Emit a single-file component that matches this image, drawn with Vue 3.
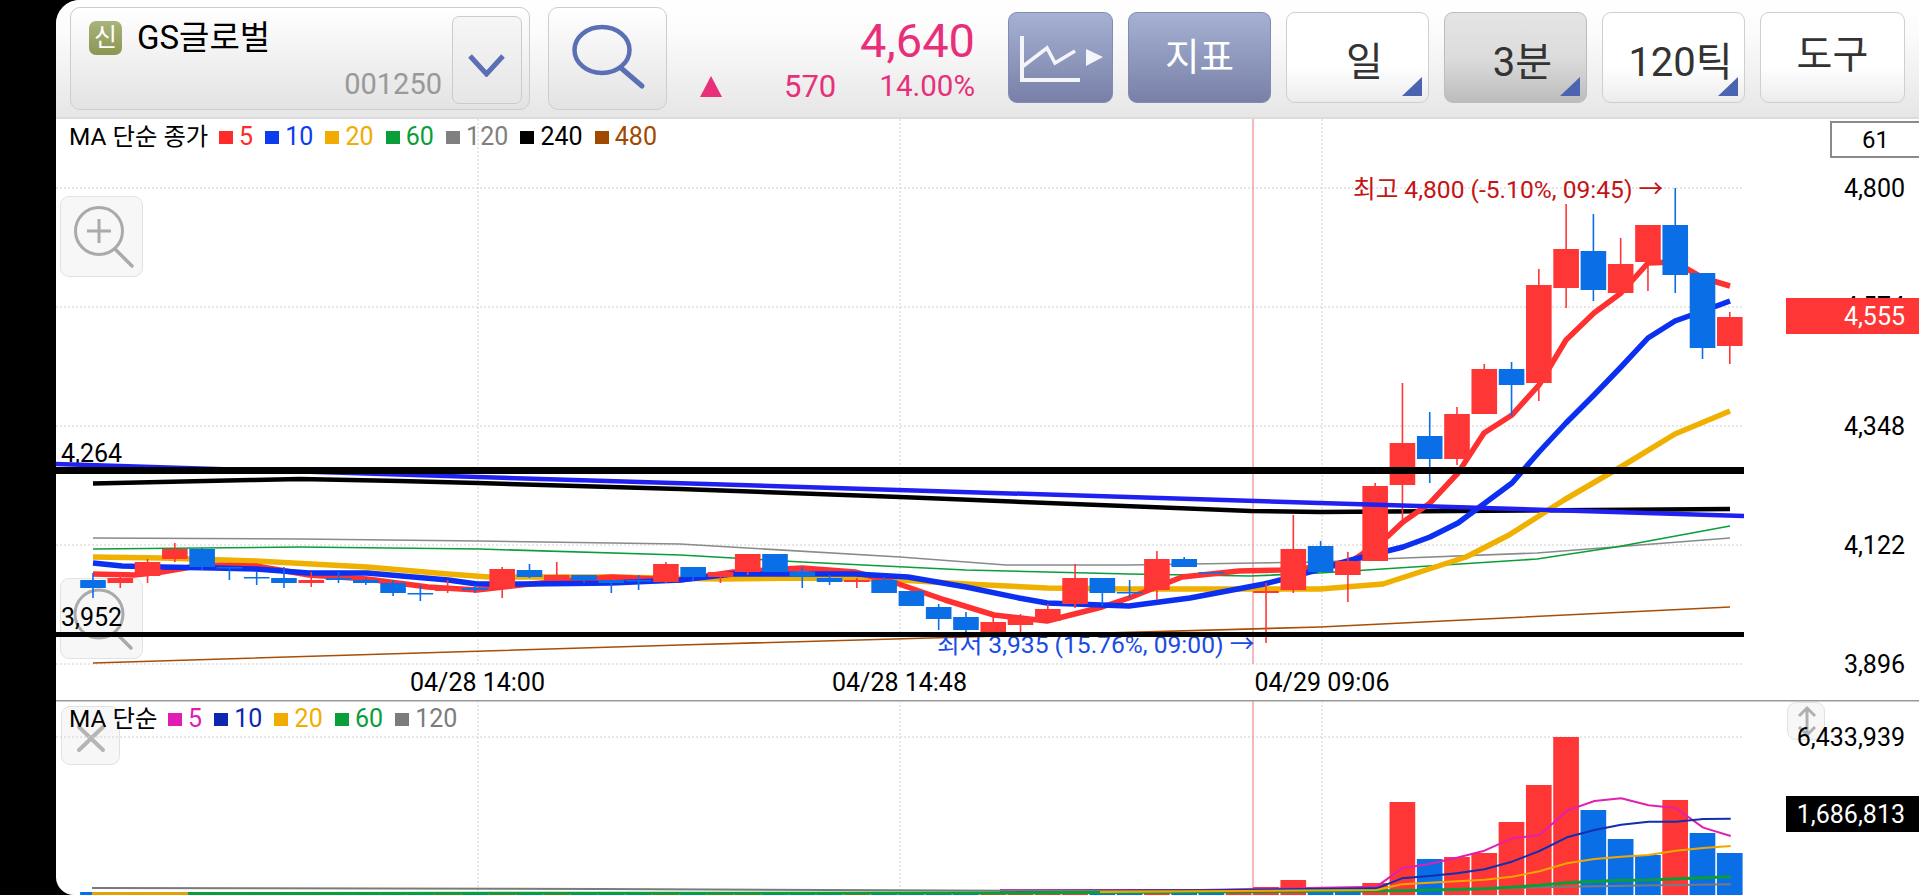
<script setup>
const X0 = 93
const STEP = 27.28
const cx = (i) => X0 + STEP * i

// dir, body top, body bottom, wick top, wick bottom (page pixels)
const raw = [
  ['b',580,588,573,598],['r',578,583,573,588],['r',562,576,559,583],['r',549,559,543,562],
  ['b',549,567,548,570],['b',567,568,567,580],['b',577,578,572,585],['b',578,583,567,588],
  ['r',580,583,572,587],['b',578,580,572,583],['b',580,583,578,585],['b',583,593,580,596],
  ['b',593,594,585,601],['r',588,591,580,593],['b',588,590,585,593],['r',569,588,567,598],
  ['b',570,577,564,578],['r',575,580,562,581],['b',575,580,575,583],['b',580,583,580,593],
  ['b',580,581,575,590],['r',564,582,562,583],['b',567,577,567,581],['r',572,577,572,583],
  ['r',554,572,554,575],['b',554,572,554,572],['b',572,577,567,588],['b',578,582,575,585],
  ['r',580,582,578,588],['b',580,593,577,593],['b',591,606,591,606],['b',607,619,604,630],
  ['b',617,630,612,632],['r',622,633,617,637],['r',617,625,614,633],['r',609,621,604,622],
  ['r',578,604,564,608],['b',578,593,578,606],['b',592,593,580,598],['r',559,590,551,600],
  ['b',559,567,557,567],['b',572,573,572,573],['r',571,573,571,573],['r',591,593,583,643],
  ['r',549,590,515,593],['b',546,572,541,572],['r',561,575,552,602],['r',486,561,483,561],
  ['r',443,485,383,520],['b',436,459,412,483],['r',414,459,407,465],['r',369,414,364,414],
  ['b',369,385,362,416],['r',285,383,269,401],['r',249,288,204,308],['b',251,290,214,301],
  ['r',264,293,238,293],['r',225,262,225,291],['b',225,275,188,293],['b',273,348,273,359],
  ['r',317,346,312,364]
]
const COLORS = { r: '#ff3636', b: '#0a6fe6' }
const candles = raw.map((c, i) => ({
  x: cx(i),
  color: COLORS[c[0]],
  top: c[1],
  h: Math.max(c[2] - c[1], 1.5),
  wt: c[3],
  wb: c[4]
}))

const toStr = (p) => p.map((q) => q.join(',')).join(' ')

const ma = [
  { c: '#8a8a8a', w: 1.6, p: [[93,538],[300,539],[478,541],[680,544],[900,557],[1006,565],[1129,565],[1320,562],[1379,559],[1537,553],[1730,538]] },
  { c: '#0a9e38', w: 1.6, p: [[93,549],[300,547],[479,549],[680,555],[802,562],[966,570],[1129,574],[1251,576],[1320,573],[1537,559],[1616,547],[1730,526]] },
  { c: '#a84e06', w: 1.6, p: [[93,663],[680,645],[1320,627],[1730,607]] },
  { c: '#000', w: 4.5, p: [[93,483.5],[250,480],[300,479],[400,481],[478,483],[680,489],[900,497],[1251,511],[1320,512],[1730,509]] },
  { c: '#f0b000', w: 5.5, p: [[93,557],[162,558],[256,561],[367,567],[448,574],[489,577],[611,577],[721,579],[802,578],[884,579],[966,584],[1047,588],[1129,589],[1320,589],[1383,584],[1466,557],[1509,535],[1564,500],[1624,465],[1675,434],[1730,411]] },
  { c: '#ff3030', w: 5.5, p: [[93,574],[134,575],[162,572],[203,565],[256,566],[309,575],[367,579],[428,587],[477,590],[530,584],[611,577],[680,580],[733,572],[802,568],[855,572],[896,583],[945,600],[994,615],[1047,621],[1102,607],[1129,598],[1182,577],[1239,571],[1280,570],[1346,565],[1387,537],[1403,522],[1430,503],[1458,473],[1484,433],[1512,415],[1539,385],[1566,340],[1594,313],[1621,293],[1648,263],[1675,262],[1703,278],[1730,286]] },
  { c: '#0c30f0', w: 5.5, p: [[93,563],[122,566],[162,567],[215,568],[256,569],[309,573],[367,573],[448,580],[477,584],[530,584],[611,583],[680,580],[733,574],[855,574],[908,577],[966,587],[1019,598],[1047,603],[1129,606],[1190,598],[1264,584],[1292,577],[1351,560],[1403,547],[1430,537],[1458,523],[1485,503],[1512,483],[1539,452],[1566,423],[1594,395],[1621,367],[1648,338],[1675,321],[1703,311],[1730,301]] }
]
const maLines = ma.map((m) => ({ c: m.c, w: m.w, d: toStr(m.p) }))

const priceGrid = [188, 307, 426, 545, 664]
const vGrid = [478, 900, 1322]
const priceLabels = [
  { t: '4,800', y: 197 },
  { t: '4,574', y: 315 },
  { t: '4,348', y: 435 },
  { t: '4,122', y: 554 },
  { t: '3,896', y: 673 }
]
const dates = [
  { t: '04/28 14:00', x: 477.5 },
  { t: '04/28 14:48', x: 899.5 },
  { t: '04/29 09:06', x: 1322 }
]

const legendPrice = [
  { t: '5', c: '#ff2a2a' }, { t: '10', c: '#0c3cf0' }, { t: '20', c: '#f0ac00' },
  { t: '60', c: '#0a9e38' }, { t: '120', c: '#808080' }, { t: '240', c: '#000' }, { t: '480', c: '#a04a00' }
]
const legendVol = [
  { t: '5', c: '#e01cb4' }, { t: '10', c: '#0c28b0' }, { t: '20', c: '#f2ac00' },
  { t: '60', c: '#0a9e38' }, { t: '120', c: '#7c7c7c' }
]

// volume bars
const volTops = {
  36: 890, 37: 891, 39: 890, 43: 887, 44: 880, 45: 888, 46: 887, 47: 883, 48: 802, 49: 859,
  50: 857, 51: 853, 52: 822, 53: 785, 54: 737, 55: 810, 56: 839, 57: 855, 58: 800, 59: 833, 60: 853
}
const volDir = { 45: 'b', 46: 'b', 47: 'r', 49: 'b', 50: 'r', 51: 'r', 52: 'r', 53: 'r', 55: 'b', 56: 'b', 57: 'b', 58: 'r', 59: 'b', 60: 'b' }
const volBars = raw.map((c, i) => {
  const top = volTops[i] ?? 892
  return { x: cx(i) - 12.9, top, h: 895 - top, color: COLORS[volDir[i] ?? c[0]] }
})
const z6 = (p) => p.map(([X, Y]) => [1200 + X / 2.18, 690 + Y / 3])
const volLines = [
  { c: '#e020b0', w: 2, p: [[1000, 890], ...z6([[0,600],[385,590],[440,535],[500,522],[560,503],[620,482],[680,445],[740,436],[800,362],[860,333],[918,325],[978,346],[1037,354],[1097,413],[1157,438]])] },
  { c: '#1030b0', w: 2, p: [[1000, 891], ...z6([[0,601],[385,595],[440,565],[500,558],[560,550],[620,538],[680,515],[740,483],[800,442],[860,420],[918,404],[978,395],[1037,395],[1097,387],[1157,386]])] },
  { c: '#7a7a7a', w: 2, p: [[92, 888], [600, 889], ...z6([[0,604],[440,602],[800,590],[1000,586],[1157,583]])] },
  { c: '#0a9e38', w: 3, p: [[92, 893.5], [1000, 893], ...z6([[0,606],[440,602],[620,596],[740,586],[800,578],[918,571],[978,570],[1097,563],[1157,560]])] },
  { c: '#f0a800', w: 2, p: [[1100, 892], ...z6([[0,604],[385,600],[440,583],[500,578],[560,574],[620,569],[680,560],[740,544],[800,520],[860,507],[918,500],[978,495],[1037,482],[1097,474],[1157,468]])] },
  { c: '#e0a010', w: 3, p: [[92, 893.5], [188, 893.5]] }
].map((l) => ({ c: l.c, w: l.w, d: toStr(l.p) }))
</script>

<template>
  <div class="page">
    <div class="rail"></div>
    <main class="main">
      <header class="head">
        <section class="stock">
          <div class="stock-info">
            <div class="stock-name">
              <span class="badge">신</span>
              <span class="name">GS글로벌</span>
            </div>
            <div class="code">001250</div>
          </div>
          <div class="drop">
            <svg width="40" height="24" viewBox="0 0 40 24"><path d="M3 3 L19.5 21 L36 3" fill="none" stroke="#5b6fb5" stroke-width="5" /></svg>
          </div>
        </section>

        <div class="search">
          <svg width="76" height="70" viewBox="0 0 76 70">
            <ellipse cx="32" cy="27" rx="27.5" ry="23" fill="none" stroke="#5b6fb5" stroke-width="4.5" />
            <path d="M51 45 L72 63" stroke="#5b6fb5" stroke-width="5" stroke-linecap="round" />
          </svg>
        </div>

        <div class="quote">
          <div class="price">4,640</div>
          <div class="change">
            <span class="up"></span>
            <span class="diff">570</span>
            <span class="pct">14.00%</span>
          </div>
        </div>

        <nav class="tools">
          <button class="btn blue icon">
            <svg width="105" height="91" viewBox="0 0 105 91">
              <path d="M14 24 V68 H72" fill="none" stroke="#f4f5fa" stroke-width="4" />
              <path d="M14 55 L39 36 L47 51 L67 39" fill="none" stroke="#f4f5fa" stroke-width="3.5" />
              <path d="M78 37 L95 45 L78 54 Z" fill="#f4f5fa" />
            </svg>
          </button>
          <button class="btn blue wide indicator">지표</button>
          <button class="btn plain wide drop-btn"><span>일</span><i class="corner"></i></button>
          <button class="btn grey wide drop-btn"><span>3분</span><i class="corner"></i></button>
          <button class="btn plain wide drop-btn"><span>120틱</span><i class="corner"></i></button>
          <button class="btn plain wide tool">도구</button>
        </nav>
      </header>

      <section class="price-panel">
        <div class="float-btn zoom-in">
          <svg width="83" height="81" viewBox="0 0 83 81">
            <circle cx="38" cy="34" r="23.5" fill="none" stroke="#aaa" stroke-width="3" />
            <path d="M38 22 V46 M26 34 H50" stroke="#aaa" stroke-width="3" />
            <path d="M54 52 L71 69" stroke="#aaa" stroke-width="3.5" stroke-linecap="round" />
          </svg>
        </div>
        <div class="float-btn zoom-out">
          <svg width="83" height="81" viewBox="0 0 83 81">
            <circle cx="38" cy="35" r="24" fill="none" stroke="#aaa" stroke-width="3" />
            <path d="M54 53 L70 69" stroke="#aaa" stroke-width="3.5" stroke-linecap="round" />
          </svg>
        </div>

        <svg class="plot" width="1863" height="581" viewBox="56 119 1863 581">
          <line v-for="y in priceGrid" :key="y" x1="56" x2="1744" :y1="y" :y2="y" class="grid" />
          <line v-for="x in vGrid" :key="x" :x1="x" :x2="x" y1="119" y2="664" class="grid" />
          <line x1="1253" x2="1253" y1="119" y2="664" class="cursor" />

          <polyline v-for="m in maLines" :key="m.c" :points="m.d" fill="none" :stroke="m.c" :stroke-width="m.w" stroke-linejoin="round" />

          <g v-for="(c, i) in candles" :key="i">
            <line :x1="c.x" :x2="c.x" :y1="c.wt" :y2="c.wb" :stroke="c.color" stroke-width="1.6" />
            <rect :x="c.x - 12.8" :y="c.top" width="25.6" :height="c.h" :fill="c.color" />
          </g>

          <text x="1353" y="198" class="num extreme hi">최고 4,800 (-5.10%, 09:45) →</text>
          <text x="937" y="653" class="num extreme lo">최저 3,935 (15.76%, 09:00) →</text>

          <text x="61" y="462" class="num">4,264</text>
          <text x="61" y="626" class="num">3,952</text>

          <line x1="56" x2="1744" y1="464" y2="516" stroke="#2020f0" stroke-width="4.5" />
          <rect x="56" y="467" width="1688" height="7" fill="#000" />
          <rect x="56" y="632" width="1688" height="5" fill="#000" />

          <text v-for="l in priceLabels" :key="l.t" x="1905" :y="l.y" text-anchor="end" class="num">{{ l.t }}</text>
          <rect x="1786" y="298" width="133" height="36" fill="#ff3636" />
          <text x="1905" y="325" text-anchor="end" class="num white">4,555</text>

          <text v-for="d in dates" :key="d.t" :x="d.x" y="691" text-anchor="middle" class="num">{{ d.t }}</text>
        </svg>

        <div class="legend legend-price">
          <span class="legend-title">MA 단순 종가</span>
          <span v-for="l in legendPrice" :key="l.t" class="legend-item" :style="{ color: l.c }"><i class="swatch" :style="{ background: l.c }"></i>{{ l.t }}</span>
        </div>
        <div class="count">61</div>
      </section>

      <section class="vol-panel">
        <div class="float-btn close">
          <svg width="59" height="59" viewBox="0 0 59 59">
            <path d="M17 20 L41 43 M41 20 L17 43" stroke="#b5b5b5" stroke-width="4" stroke-linecap="round" />
          </svg>
        </div>
        <div class="float-btn expand">
          <svg width="38" height="38" viewBox="0 0 38 38">
            <path d="M19 5 V32 M11 13 L19 5 L27 13 M11 24 L19 32 L27 24" fill="none" stroke="#b0b0b0" stroke-width="3" />
          </svg>
        </div>

        <svg class="plot" width="1863" height="195" viewBox="56 700 1863 195">
          <line x1="56" x2="1919" y1="700.5" y2="700.5" stroke="#999" stroke-width="2" />
          <line x1="56" x2="1744" y1="737" y2="737" class="grid" />
          <line v-for="x in vGrid" :key="x" :x1="x" :x2="x" y1="701" y2="895" class="grid" />
          <line x1="1253" x2="1253" y1="701" y2="895" class="cursor" />
          <rect v-for="(b, i) in volBars" :key="i" :x="b.x" :y="b.top" width="25.7" :height="b.h" :fill="b.color" />
          <polyline v-for="l in volLines" :key="l.c" :points="l.d" fill="none" :stroke="l.c" :stroke-width="l.w" stroke-linejoin="round" />
          <text x="1905" y="746" text-anchor="end" class="num">6,433,939</text>
          <rect x="1786" y="796" width="133" height="36" fill="#000" />
          <text x="1905" y="823" text-anchor="end" class="num white">1,686,813</text>
        </svg>

        <div class="legend legend-vol">
          <span class="legend-title">MA 단순</span>
          <span v-for="l in legendVol" :key="l.t" class="legend-item" :style="{ color: l.c }"><i class="swatch" :style="{ background: l.c }"></i>{{ l.t }}</span>
        </div>
      </section>
    </main>
  </div>
</template>

<style>
html, body { margin: 0; background: #000; overflow: hidden; }
</style>

<style scoped>
.page {
  width: 1919px;
  height: 895px;
  display: flex;
  background: #000;
  font-family: Roboto, "Noto Sans CJK KR", sans-serif;
  overflow: hidden;
}
.rail { flex: 0 0 56px; background: #000; }
.main {
  flex: 1;
  display: flex;
  flex-direction: column;
  background: #fff;
  border-radius: 24px 0 0 18px;
  overflow: hidden;
}
.head {
  flex: 0 0 119px;
  box-sizing: border-box;
  display: flex;
  align-items: flex-start;
  padding: 7px 0 0 14px;
  background: linear-gradient(#fff 0%, #fbfbfb 30%, #e6e6e6 100%);
  border-bottom: 2px solid #dcdcdc;
}
.stock {
  width: 460px;
  height: 103px;
  box-sizing: border-box;
  display: flex;
  padding: 8px 7px 7px 18px;
  border: 1.5px solid #cdcdcd;
  border-radius: 10px;
  background: linear-gradient(#fff, #e3e3e3);
}
.stock-info {
  flex: 1;
  display: flex;
  flex-direction: column;
  justify-content: space-between;
  padding-right: 10px;
}
.stock-name { display: flex; align-items: center; gap: 15px; margin-top: 5px; }
.badge {
  width: 33px;
  height: 34px;
  border-radius: 7px;
  display: flex;
  align-items: center;
  justify-content: center;
  background: linear-gradient(#a9b37c, #8a9650);
  color: #fff;
  font-size: 25px;
  line-height: 34px;
}
.name { font-size: 33px; line-height: 34px; color: #000; }
.code { text-align: right; font-size: 29px; line-height: 30px; color: #999; margin-bottom: 3px; }
.drop {
  flex: 0 0 70px;
  height: 88px;
  box-sizing: border-box;
  border: 1.5px solid #cbcbcb;
  border-radius: 7px;
  display: flex;
  align-items: flex-start;
  justify-content: center;
  padding-top: 36px;
  background: linear-gradient(#f6f6f6, #e6e6e6);
}
.search {
  width: 119px;
  height: 103px;
  margin-left: 18px;
  box-sizing: border-box;
  border: 1.5px solid #cdcdcd;
  border-radius: 10px;
  background: linear-gradient(#fff, #e3e3e3);
  display: flex;
  padding: 15px 0 0 21px;
}
.search svg { display: block; }
.quote {
  flex: 0 0 341px;
  box-sizing: border-box;
  padding: 10px 33px 0 0;
  display: flex;
  flex-direction: column;
  align-items: flex-end;
  color: #e8307a;
}
.price { font-size: 47px; line-height: 47px; }
.change { display: flex; align-items: center; margin-top: 8px; font-size: 29.5px; line-height: 29px; }
.up {
  width: 22px;
  height: 21px;
  margin-right: 62px;
  background: #e8307a;
  clip-path: polygon(50% 0, 100% 100%, 0 100%);
}
.diff { margin-right: 43px; font-size: 31px; }
.tools { display: flex; gap: 15px; margin-top: 5px; }
.btn {
  height: 91px;
  box-sizing: border-box;
  padding: 0;
  position: relative;
  border-radius: 9px;
  font: inherit;
  font-size: 40px;
  line-height: 1;
  color: #333;
}
.btn svg { display: block; position: absolute; left: -1px; top: -1px; }
.icon { width: 105px; }
.wide { width: 143px; }
.indicator { font-size: 37.5px; }
.blue {
  border: 1.5px solid #7f8cb8;
  background: linear-gradient(#a6b1d2, #7980a8);
  color: #fff;
}
.plain {
  border: 1.5px solid #cfcfcf;
  background: linear-gradient(#fff 0%, #fff 60%, #ececec 100%);
}
.grey {
  border: 1.5px solid #bcbcbc;
  background: linear-gradient(#e4e4e4 0%, #dcdcdc 50%, #bcbcbc 100%);
}
.drop-btn span { display: inline-block; padding: 10px 0 0 14px; }
.tool { font-size: 39px; width: 145px; padding-bottom: 4px; }
.corner {
  position: absolute;
  right: 6px;
  bottom: 6px;
  width: 20px;
  height: 19px;
  background: #4a64b0;
  clip-path: polygon(100% 0, 100% 100%, 0 100%);
}
.price-panel, .vol-panel { position: relative; }
.price-panel { flex: 0 0 581px; height: 581px; }
.vol-panel { flex: 0 0 195px; height: 195px; }
.plot { position: absolute; left: 0; top: 0; display: block; z-index: 1; }
.grid { stroke: #cfcfcf; stroke-width: 1; stroke-dasharray: 2 2; }
.cursor { stroke: #f08a8a; stroke-width: 1.2; }
.num { font-size: 25px; fill: #000; font-family: Roboto, "Noto Sans CJK KR", sans-serif; }
.white { fill: #fff; }
.extreme { font-size: 24.6px; }
.hi { fill: #c41414; }
.lo { fill: #1a4ce6; }
.float-btn {
  position: absolute;
  box-sizing: border-box;
  border: 1.5px solid #e2e2e2;
  border-radius: 9px;
  background: #f7f7f7;
}
.float-btn svg { display: block; }
.zoom-in { left: 4px; top: 77px; width: 83px; height: 81px; }
.zoom-out { left: 4px; top: 459px; width: 83px; height: 81px; }
.close { left: 5px; top: 6px; width: 59px; height: 59px; }
.expand { left: 1731px; top: 2px; width: 38px; height: 38px; }
.legend {
  position: absolute;
  left: 13px;
  z-index: 2;
  display: flex;
  align-items: center;
  font-size: 25px;
  line-height: 28px;
  white-space: nowrap;
  color: #000;
}
.legend-price { top: 4px; }
.legend-vol { top: 5px; }
.legend-title { margin-right: 10.5px; font-size: 24.4px; }
.legend-item { display: flex; align-items: center; margin-right: 12px; }
.swatch { width: 14px; height: 13px; margin-right: 6.2px; }
.count {
  position: absolute;
  right: 0;
  top: 2px;
  width: 89px;
  height: 37px;
  box-sizing: border-box;
  border: 2px solid #8a8a8a;
  border-right: 0;
  background: #fff;
  text-align: center;
  font-size: 24px;
  line-height: 34px;
  color: #000;
  z-index: 2;
}
</style>
